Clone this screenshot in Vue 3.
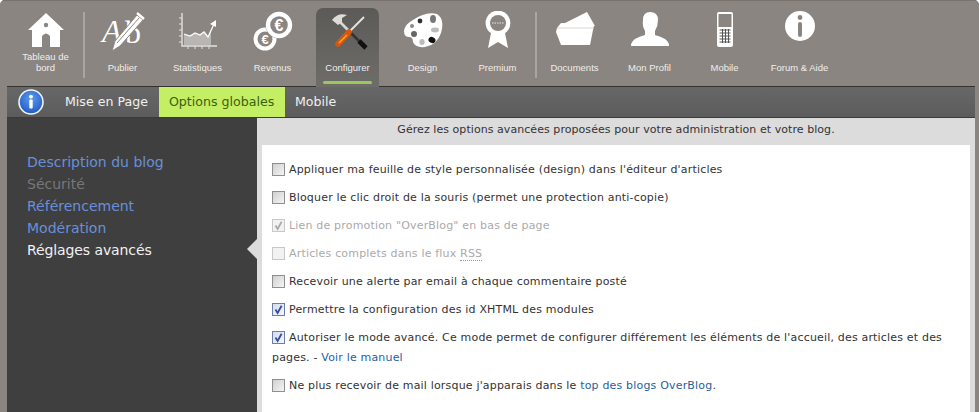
<template>
  <div class="page">
    <nav class="topnav">
      <template v-for="item in navItems" :key="item.label">
        <div class="nav-item" :class="{ active: item.active }">
          <div class="nav-icon">
            <svg width="48" height="42" viewBox="0 0 48 42">
              <g v-if="item.icon === 'home'">
                <path d="M24 2 L42 19 L38 19 L38 36 L10 36 L10 19 L6 19 Z" fill="#fff" />
                <circle cx="24" cy="14" r="2.2" fill="#8a8580" />
                <path d="M20 36 L20 25 Q24 20 28 25 L28 36 Z" fill="#8a8580" />
              </g>
              <g v-else-if="item.icon === 'write'">
                <text x="3" y="31" class="glyph-a">A</text>
                <text x="26" y="32" class="glyph-b">b</text>
                <path d="M38 4 L44 9 L21 35 L13 40 L16 30 Z" fill="#fff" stroke="#8a8580" stroke-width="1" />
                <path d="M18 32 L40 7" stroke="#8a8580" stroke-width="1" />
                <path d="M38 2 L45 8" stroke="#fff" stroke-width="2.4" />
              </g>
              <g v-else-if="item.icon === 'stats'">
                <path d="M8 2 V35 H43" fill="none" stroke="#e4e2df" stroke-width="1.4" />
                <path d="M5 7 H8 M5 13 H8 M5 19 H8 M5 25 H8 M5 31 H8 M14 35 V38 M21 35 V38 M28 35 V38 M35 35 V38" stroke="#e4e2df" stroke-width="1" />
                <path d="M10 23 L16 25 L21 22 L26 24 L30 21 L34 26 L37 19 L37 34 L10 34 Z" fill="#b8b5b2" />
                <path d="M10 23 L16 25 L21 22 L26 24 L30 21 L34 26 L40 13" fill="none" stroke="#fff" stroke-width="1.3" />
                <path d="M36 13 L42 9 L42 16 Z" fill="#fff" />
              </g>
              <g v-else-if="item.icon === 'money'">
                <circle cx="16" cy="28" r="9.5" fill="none" stroke="#fff" stroke-width="4" />
                <text x="16" y="33" class="glyph-euro small">€</text>
                <circle cx="30" cy="14" r="13.5" fill="#8a8580" />
                <circle cx="30" cy="14" r="11" fill="none" stroke="#fff" stroke-width="4.4" />
                <text x="30" y="20" class="glyph-euro">€</text>
              </g>
              <g v-else-if="item.icon === 'tools'">
                <path d="M14 9 L27 22" stroke="#d9d7d3" stroke-width="2.6" />
                <path d="M26 21 L36 31" stroke="#333" stroke-width="2.6" />
                <path d="M35 30 L42 37" stroke="#111" stroke-width="4.6" />
                <path d="M8 9 Q14 1 23 4 L18 7 L18 11 L14 14 Z" fill="#dedcd8" />
                <path d="M40 6 L25 21" stroke="#e8e6e2" stroke-width="1.8" />
                <path d="M25 21 L14 33" stroke="#d8570f" stroke-width="5.6" stroke-linecap="round" />
                <path d="M23 24 L15 32" stroke="#f2b21a" stroke-width="1.2" />
              </g>
              <g v-else-if="item.icon === 'palette'">
                <path d="M14 9 Q27 0 38 3 Q46 8 42 22 Q38 34 26 36 Q16 37 14 31 Q14 26 10 26 Q5 26 5 20 Q6 13 14 9 Z" fill="#fff" />
                <ellipse cx="34" cy="8" rx="3" ry="4" fill="#777" />
                <ellipse cx="36" cy="19" rx="4" ry="2.4" fill="#bbb" />
                <ellipse cx="33" cy="29" rx="3.6" ry="3" fill="#111" transform="rotate(30 33 29)" />
                <ellipse cx="23" cy="31" rx="2.6" ry="3" fill="#bbb" />
                <circle cx="15" cy="23" r="3" fill="#666" />
                <circle cx="13" cy="15" r="2" fill="#888" />
                <circle cx="21" cy="10" r="2.4" fill="#333" />
              </g>
              <g v-else-if="item.icon === 'award'">
                <path d="M17 22 L14 37 L24 31 L34 37 L31 22 Z" fill="#fff" />
                <circle cx="24" cy="12" r="12.4" fill="#fff" />
                <circle cx="24" cy="12" r="8" fill="#8a8580" />
                <path d="M18 12 H30" stroke="#c8c6c3" stroke-width="1.4" stroke-dasharray="1.5 1" />
              </g>
              <g v-else-if="item.icon === 'folder'">
                <path d="M8 15 L36 1 L44 15 Z" fill="#fff" />
                <path d="M6 17 L10 12 L20 12 L22 15 L43 15 L42 19 L39 34 L10 34 L5 21 Z" fill="#fff" />
                <path d="M6 17 H42" stroke="#cfcdca" stroke-width="0.8" />
              </g>
              <g v-else-if="item.icon === 'user'">
                <path d="M17 9 Q17 1 24 1 Q32 1 32 9 Q32 15 29 20 L29 24 Q41 27 43 33 L43 35 L5 35 L5 33 Q7 27 19 24 L19 20 Q16 15 17 9 Z" fill="#fff" />
              </g>
              <g v-else-if="item.icon === 'phone'">
                <rect x="16" y="1" width="16" height="35" rx="2" fill="#fff" />
                <rect x="17.5" y="3" width="13" height="13" fill="#8a8580" />
                <rect x="18.5" y="18" width="11" height="14" fill="#fff" />
                <path d="M18.5 19 H29.5 M18.5 22 H29.5 M18.5 25 H29.5 M18.5 28 H29.5 M18.5 31 H29.5" stroke="#555" stroke-width="1" />
                <path d="M21.5 18 V32 M24.5 18 V32 M27.5 18 V32" stroke="#555" stroke-width="1" />
              </g>
              <g v-else-if="item.icon === 'info'">
                <circle cx="24" cy="15" r="15" fill="#fff" />
                <circle cx="24" cy="6.5" r="2.4" fill="#8a8580" />
                <rect x="22" y="11" width="4" height="15" rx="2" fill="#8a8580" />
              </g>
            </svg>
          </div>
          <div class="nav-label">{{ item.label }}</div>
          <div v-if="item.active" class="active-bar"></div>
        </div>
        <div v-if="item.sep" class="nav-sep"></div>
      </template>
    </nav>

    <div class="subnav">
      <svg class="subnav-info" width="26" height="26" viewBox="0 0 26 26">
        <defs>
          <radialGradient id="blue" cx="0.5" cy="0.35" r="0.7">
            <stop offset="0" stop-color="#5d9af0" />
            <stop offset="1" stop-color="#1a56c0" />
          </radialGradient>
        </defs>
        <circle cx="13" cy="13" r="12" fill="url(#blue)" stroke="#f1f4fa" stroke-width="1.6" />
        <circle cx="13" cy="7.6" r="1.9" fill="#fff" />
        <rect x="11.3" y="10.6" width="3.4" height="9" rx="1" fill="#fff" />
      </svg>
      <a v-for="tab in tabs" :key="tab.label" class="tab" :class="{ current: tab.current }">{{ tab.label }}</a>
    </div>

    <div class="content">
      <aside class="sidebar">
        <a v-for="link in sideLinks" :key="link.label" class="side-link" :class="link.kind">{{ link.label }}</a>
        <span class="side-arrow"></span>
      </aside>
      <main class="main">
        <p class="intro">Gérez les options avancées proposées pour votre administration et votre blog.</p>
        <div class="panel">
          <div v-for="(opt, i) in options" :key="i" class="option" :class="{ disabled: opt.disabled }">
            <span class="box" :class="{ on: opt.checked }">
              <svg v-if="opt.checked" width="11" height="11" viewBox="0 0 11 11">
                <path d="M2.5 5.5 L4.6 9 L8.6 1.8" fill="none" :stroke="opt.disabled ? '#aaa' : '#2f4f9a'" stroke-width="1.8" />
              </svg>
            </span>
            <span v-html="opt.text"></span>
          </div>
        </div>
      </main>
    </div>
  </div>
</template>

<script setup>
const navItems = [
  { label: 'Tableau de bord', icon: 'home', sep: true },
  { label: 'Publier', icon: 'write' },
  { label: 'Statistiques', icon: 'stats' },
  { label: 'Revenus', icon: 'money' },
  { label: 'Configurer', icon: 'tools', active: true },
  { label: 'Design', icon: 'palette' },
  { label: 'Premium', icon: 'award', sep: true },
  { label: 'Documents', icon: 'folder' },
  { label: 'Mon Profil', icon: 'user' },
  { label: 'Mobile', icon: 'phone' },
  { label: 'Forum & Aide', icon: 'info' }
]

const tabs = [
  { label: 'Mise en Page' },
  { label: 'Options globales', current: true },
  { label: 'Mobile' }
]

const sideLinks = [
  { label: 'Description du blog', kind: 'link' },
  { label: 'Sécurité', kind: 'off' },
  { label: 'Référencement', kind: 'link' },
  { label: 'Modération', kind: 'link' },
  { label: 'Réglages avancés', kind: 'here' }
]

const options = [
  { text: "Appliquer ma feuille de style personnalisée (design) dans l'éditeur d'articles" },
  { text: 'Bloquer le clic droit de la souris (permet une protection anti-copie)' },
  { text: 'Lien de promotion "OverBlog" en bas de page', checked: true, disabled: true },
  { text: 'Articles complets dans le flux <abbr>RSS</abbr>', disabled: true },
  { text: 'Recevoir une alerte par email à chaque commentaire posté' },
  { text: 'Permettre la configuration des id XHTML des modules', checked: true },
  { text: "Autoriser le mode avancé. Ce mode permet de configurer différement les éléments de l'accueil, des articles et des pages. - <a>Voir le manuel</a>", checked: true },
  { text: "Ne plus recevoir de mail lorsque j'apparais dans le <a>top des blogs OverBlog</a>." }
]
</script>

<style>
html, body {
  margin: 0;
  background: #fff;
}
.option a {
  color: #1f5f9e;
}
.option abbr {
  border-bottom: 1px dotted #999;
}
</style>

<style scoped>
.page {
  width: 979px;
  height: 412px;
  overflow: hidden;
  background: #8a8580;
  border-radius: 5px 5px 0 0;
  font-family: "DejaVu Sans", Verdana, sans-serif;
}

.topnav {
  height: 86px;
  box-sizing: border-box;
  padding: 1px 0 0 8px;
  display: flex;
  background: #8a8580;
  border-top: 1px solid #77726e;
}

.nav-item {
  position: relative;
  width: 75px;
  height: 84px;
  display: flex;
  flex-direction: column;
  align-items: center;
  box-sizing: border-box;
  padding-top: 9px;
}
.nav-item.active::before {
  content: '';
  position: absolute;
  left: 6px;
  right: 6px;
  top: 6px;
  bottom: -1px;
  border-radius: 7px 7px 0 0;
  background: linear-gradient(#5c5a57, #6f6d6a);
}

.nav-icon {
  position: relative;
  height: 39px;
}

.nav-label {
  position: relative;
  width: 62px;
  height: 22px;
  margin-top: 1px;
  display: flex;
  align-items: flex-end;
  justify-content: center;
  text-align: center;
  font-family: "Liberation Sans", Arial, sans-serif;
  font-size: 9.5px;
  line-height: 11px;
  color: #f0eeec;
}

.active-bar {
  position: absolute;
  left: 13px;
  right: 13px;
  bottom: 2px;
  height: 3px;
  border-radius: 2px;
  background: #9ac85a;
}

.nav-sep {
  width: 2px;
  height: 66px;
  margin-top: 10px;
  background: #a9a6a2;
}

.glyph-a, .glyph-b {
  font-family: "Liberation Serif", serif;
  font-size: 32px;
  fill: #fff;
}
.glyph-a {
  font-style: italic;
}
.glyph-euro {
  font-family: "Liberation Sans", sans-serif;
  font-weight: bold;
  font-size: 16px;
  text-anchor: middle;
  fill: #fff;
}
.glyph-euro.small {
  font-size: 13px;
}

.subnav {
  height: 30px;
  margin: 0 4px 0 7px;
  display: flex;
  align-items: stretch;
  background: linear-gradient(#676767, #5c5c5c);
  border-top: 1px solid #333;
  border-bottom: 1px solid #3a3a3a;
}
.subnav-info {
  margin: 2px 10px 0 11px;
}
.tab {
  padding: 0 10px;
  line-height: 29px;
  font-size: 12.6px;
  color: #f0f0f0;
}
.tab:first-of-type {
  margin-left: 1px;
}
.tab.current {
  width: 106px;
  margin-left: 1px;
  background: #c4ee64;
  color: #3f5f10;
}

.content {
  display: flex;
  height: 294px;
  margin: 0 4px 0 7px;
}

.sidebar {
  position: relative;
  width: 250px;
  box-sizing: border-box;
  padding: 33px 0 0 20px;
  background: #3f3f3f;
  display: flex;
  flex-direction: column;
}
.side-link {
  font-size: 14px;
  line-height: 22px;
}
.side-link.link { color: #6a8fd8; }
.side-link.off { color: #77777a; }
.side-link.here { color: #f2f2f2; letter-spacing: -0.1px; }
.side-arrow {
  position: absolute;
  right: 0;
  top: 121px;
  border: 10px solid transparent;
  border-left-width: 0;
  border-right-color: #dcdcdc;
}

.main {
  flex: 1;
  background: #dcdcdc;
  padding: 0 5px;
}
.intro {
  margin: 0;
  height: 27px;
  line-height: 23px;
  text-align: center;
  font-size: 11px;
  letter-spacing: 0.06px;
  color: #333;
}
.panel {
  background: #fff;
  height: 300px;
  padding: 11px 10px 0;
}
.option {
  padding: 4px 0;
  font-size: 11px;
  letter-spacing: 0.18px;
  line-height: 20px;
  color: #333;
}
.option.disabled {
  color: #aaa;
}
.box {
  display: inline-block;
  vertical-align: -3px;
  width: 11px;
  height: 11px;
  margin-right: 4px;
  border: 1px solid #8f8f8f;
  background: linear-gradient(135deg, #d0d0d0, #f4f4f4);
}
.box svg {
  display: block;
}
.box.on {
  background: linear-gradient(135deg, #d5dcec, #f4f6fb);
  border-color: #6c7fa6;
}
.option.disabled .box {
  border-color: #c8c8c8;
  background: #f2f2f2;
}
</style>
